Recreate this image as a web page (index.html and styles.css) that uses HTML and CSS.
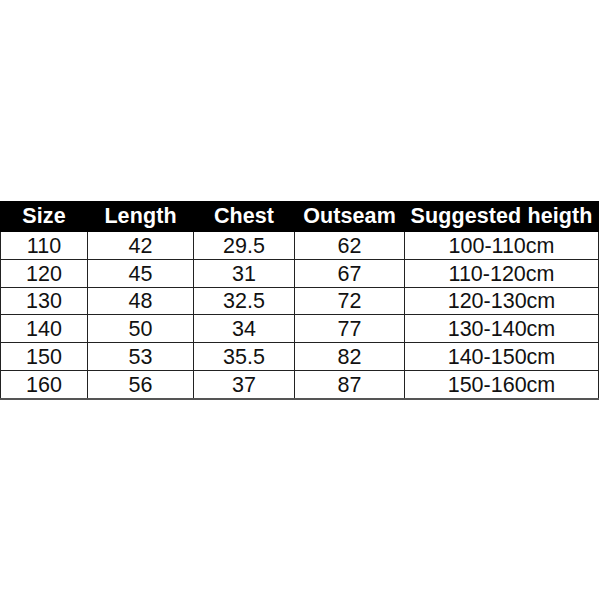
FILE: index.html
```html
<!DOCTYPE html>
<html>
<head>
<meta charset="utf-8">
<link rel="stylesheet" href="styles.css">
</head>
<body>
<div class="wrap">
<table class="size-table">
<colgroup>
<col class="c1"><col class="c2"><col class="c3"><col class="c4"><col class="c5">
</colgroup>
<thead>
<tr><th>Size</th><th>Length</th><th>Chest</th><th>Outseam</th><th>Suggested heigth</th></tr>
</thead>
<tbody>
<tr><td>110</td><td>42</td><td>29.5</td><td>62</td><td>100-110cm</td></tr>
<tr><td>120</td><td>45</td><td>31</td><td>67</td><td>110-120cm</td></tr>
<tr><td>130</td><td>48</td><td>32.5</td><td>72</td><td>120-130cm</td></tr>
<tr><td>140</td><td>50</td><td>34</td><td>77</td><td>130-140cm</td></tr>
<tr><td>150</td><td>53</td><td>35.5</td><td>82</td><td>140-150cm</td></tr>
<tr><td>160</td><td>56</td><td>37</td><td>87</td><td>150-160cm</td></tr>
</tbody>
</table>
</div>
</body>
</html>
```
FILE: styles.css
```css
html, body {
  margin: 0;
  padding: 0;
  background: #fff;
}
.wrap {
  padding: 201px 0 0 0;
}
.size-table {
  border-collapse: collapse;
  table-layout: fixed;
  width: 598px;
  font-family: "Liberation Sans", Arial, sans-serif;
  color: #111;
}
.c1 { width: 87px; }
.c2 { width: 106px; }
.c3 { width: 101px; }
.c4 { width: 110px; }
.c5 { width: 194px; }
.size-table th {
  background: #000;
  color: #fff;
  font-weight: bold;
  font-size: 21.5px;
  height: 29px;
  padding: 0;
  border: 1px solid #000;
  text-align: center;
  white-space: nowrap;
  letter-spacing: 0.1px;
}
.size-table td {
  font-size: 21.5px;
  height: 25.8px;
  padding: 1px 0 0 0;
  border: 1px solid #222;
  text-align: center;
  line-height: 20px;
}
.size-table tbody tr:last-child td {
  border-bottom: 2px solid #555;
}
```
